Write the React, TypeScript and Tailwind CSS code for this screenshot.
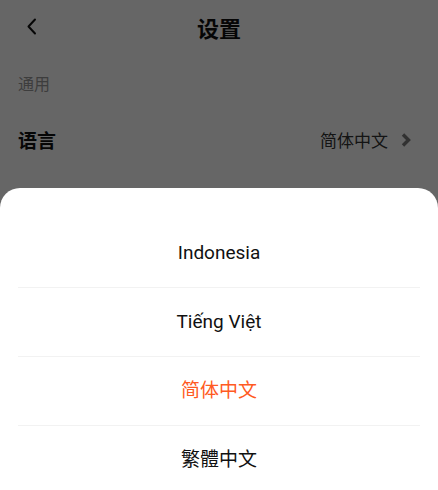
import React from "react";

const font = { fontFamily: '"Noto Sans CJK SC", "Noto Sans", sans-serif' };
const latin = { fontFamily: 'Roboto, "Noto Sans CJK SC", sans-serif' };

export default function App() {
  const langs = [
    { label: "Indonesia", active: false },
    { label: "Tiếng Việt", active: false },
    { label: "简体中文", active: true },
    { label: "繁體中文", active: false },
  ];
  return (
    <div className="relative h-[490px] w-[438px] overflow-hidden bg-white" style={font}>
      <div className="relative flex h-[54px] items-center justify-center">
        <div className="absolute left-[26px] top-[18px]">
          <svg width="12" height="17" viewBox="0 0 12 17" fill="none">
            <path d="M9 1.5 L2.5 8.5 L9 15.5" stroke="#111" strokeWidth="2" strokeLinecap="round" strokeLinejoin="round" />
          </svg>
        </div>
        <span className="text-[22px] font-bold leading-none text-[#111]">设置</span>
      </div>
      <div className="px-[18px] pt-[18px] text-[16px] leading-[22px] text-[#999]">通用</div>
      <div className="mt-[18px] flex h-[56px] items-center justify-between pl-[18px] pr-[26px]">
        <span className="text-[19px] font-bold text-[#111]">语言</span>
        <div className="flex items-center">
          <span className="text-[17px] text-[#333]">简体中文</span>
          <svg className="ml-[12px]" width="12" height="14" viewBox="0 0 12 14" fill="none">
            <path d="M3 1.5 L8.5 7 L3 12.5" stroke="#7a7a7a" strokeWidth="3.4" strokeLinejoin="miter" />
          </svg>
        </div>
      </div>

      <div className="absolute inset-0 bg-black/60" />

      <div className="absolute left-0 right-0 top-[188px] h-[310px] rounded-t-[20px] bg-white pt-[31px]">
        {langs.map((l, i) => (
          <div key={l.label}>
            {i > 0 && <div className="mx-[18px] h-px bg-[#f2f2f2]" />}
            <div
              className={`flex h-[68px] items-center justify-center text-[19px] ${l.active ? "text-[#ff5a22]" : "text-[#111]"}`}
              style={latin}
            >
              {l.label}
            </div>
          </div>
        ))}
      </div>
    </div>
  );
}
